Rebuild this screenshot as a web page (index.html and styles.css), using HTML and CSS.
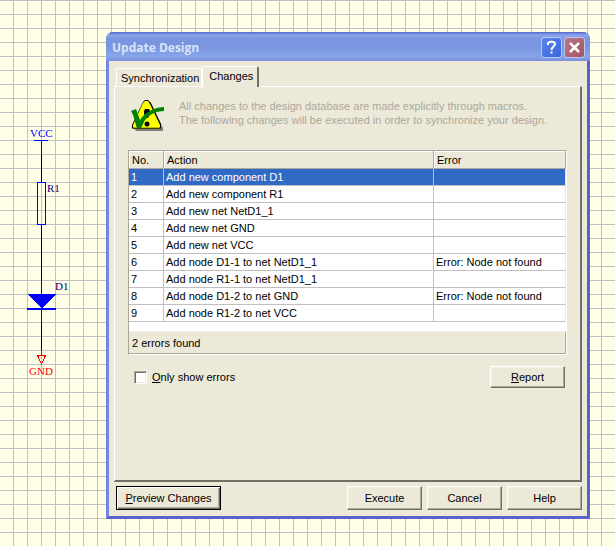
FILE: index.html
```
<!DOCTYPE html>
<html lang="en">
<head>
    <meta charset="UTF-8">
    <title>Update Design</title>
    <link rel="stylesheet" href="styles.css">
</head>
<body>
<!-- schematic sheet -->
<svg class="schematic" width="80" height="390" shape-rendering="crispEdges">
    <g fill="#000">
        <rect x="41" y="155" width="1" height="27"/>
        <rect x="41" y="225" width="1" height="55"/>
        <rect x="41" y="322" width="1" height="28"/>
    </g>
    <g fill="#00f">
        <rect x="34" y="140" width="14" height="1"/>
        <rect x="41" y="140" width="1" height="15"/>
        <rect x="41" y="280" width="1" height="42"/>
        <path d="M27 294h29L42 308h-1z"/>
        <rect x="27" y="308" width="29" height="2"/>
    </g>
    <rect x="37.5" y="182.5" width="8" height="42" fill="none" stroke="#00f"/>
    <rect x="41" y="350" width="1" height="6" fill="#f00"/>
    <path d="M37.500 355.500h8l-4 8.500z" fill="none" stroke="#f00"/>
    <text class="port" x="30" y="137">VCC</text>
    <text class="part" x="47" y="192">R1</text>
    <text class="part" x="55" y="290">D1</text>
    <text class="ground" x="29" y="375">GND</text>
</svg>

<div class="window">
    <div class="title-bar">
        <h1>Update Design</h1>
        <button class="cap help" aria-label="Help">
            <svg width="19" height="19" fill="none" stroke="#fff" stroke-width="2"><path d="M6 7V6c0-3 7-3 7 0 0 2.500-3.500 2.500-3.500 6M9.500 13.500v2"/></svg>
        </button>
        <button class="cap close" aria-label="Close">
            <svg width="19" height="19" fill="none" stroke="#fff" stroke-width="2.500"><path d="M5 5l9 9M14 5l-9 9"/></svg>
        </button>
    </div>
    <div class="client">
        <div class="tabs" role="tablist">
            <button class="tab" role="tab" aria-selected="false">Synchronization</button>
            <button class="tab active" role="tab" aria-selected="true">Changes</button>
        </div>
        <div class="panel" role="tabpanel">
            <div class="intro">
                <svg width="34" height="34">
                    <path d="M16 3h2l13 26v3H4l-2-3z" fill="#808080"/>
                    <path d="M13 1h3l3 3 10 21v4l-1 1H1l-1-1v-3L11 3z" fill="#000"/>
                    <path d="M13 2h3l2 3 10 21v2l-1 1H2l-1-1v-2L11 4z" fill="#ff0"/>
                    <path d="M1 29h27" stroke="#808000"/>
                    <path d="M13 10h4l1 2v3l-2 4h-2l-2-4v-3z"/>
                    <circle cx="15" cy="25" r="2.500"/>
                    <path d="M-1 12l5-2 4 11c4-6 11-12 24-13v4c-9 0-15 4-19 9l-4 8H5C3 24 2 16-1 12z" fill="#008000"/>
                </svg>
                <p>All changes to the design database are made explicitly through macros.<br>
                The following changes will be executed in order to synchronize your design.</p>
            </div>
            <div class="grid">
                <table>
                    <thead>
                        <tr><th class="no">No.</th><th>Action</th><th class="error">Error</th></tr>
                    </thead>
                    <tbody>
                        <tr class="selected"><td>1</td><td>Add new component D1</td><td></td></tr>
                        <tr><td>2</td><td>Add new component R1</td><td></td></tr>
                        <tr><td>3</td><td>Add new net NetD1_1</td><td></td></tr>
                        <tr><td>4</td><td>Add new net GND</td><td></td></tr>
                        <tr><td>5</td><td>Add new net VCC</td><td></td></tr>
                        <tr><td>6</td><td>Add node D1-1 to net NetD1_1</td><td>Error: Node not found</td></tr>
                        <tr><td>7</td><td>Add node R1-1 to net NetD1_1</td><td></td></tr>
                        <tr><td>8</td><td>Add node D1-2 to net GND</td><td>Error: Node not found</td></tr>
                        <tr><td>9</td><td>Add node R1-2 to net VCC</td><td></td></tr>
                    </tbody>
                </table>
                <div class="status">2 errors found</div>
            </div>
            <div class="options">
                <input type="checkbox" id="only-errors">
                <label for="only-errors"><u>O</u>nly show errors</label>
                <button class="btn"><u>R</u>eport</button>
            </div>
        </div>
        <div class="actions">
            <button class="btn default"><u>P</u>review Changes</button>
            <button class="btn">Execute</button>
            <button class="btn">Cancel</button>
            <button class="btn">Help</button>
        </div>
    </div>
</div>
</body>
</html>
```
FILE: styles.css
```
*{
    box-sizing:border-box;
}
body,h1,p{
    margin:0;
}
body{
    min-height:100vh;
    padding:32px 25px 27px 106px;
    background-color:#ffffe8;
    background-image:
        linear-gradient(#c0c0c0 1px,transparent 1px),
        linear-gradient(90deg,#c0c0c0 1px,transparent 1px);
    background-size:14px 14px;
    background-position:0 0,13px 0;
    font:11px/14px "Liberation Sans",Arial,sans-serif;
    color:#000;
}
button{
    font:inherit;
    color:inherit;
}
u{
    text-underline-offset:1px;
}

/* schematic */
.schematic{
    position:absolute;
    left:0;
    top:0;
}
.schematic text{
    font:11px "Liberation Serif","Times New Roman",serif;
}
.port{fill:#00f;}
.part{fill:#000080;}
.ground{fill:#f00;}

/* window frame */
.window{
    border-radius:7px 7px 0 0;
    overflow:hidden;
    background:#5057bb;
}
.title-bar{
    display:flex;
    align-items:center;
    gap:2px;
    height:29px;
    padding:2px 5px 0 6px;
    background:linear-gradient(#4e66c8,#8ba4ee 3px,#7a94df 7px,#7b97e0 16px,#86a5ec 24px,#7b8fdc 29px);
}
.title-bar h1{
    flex:1;
    font:bold 12px/18px "Open Sans",sans-serif;
    color:#d8e4f8;
}
.cap{
    width:21px;
    height:21px;
    padding:0;
    border:1px solid #b8c8f5;
    border-radius:3px;
}
.cap svg{
    display:block;
}
.help{background:linear-gradient(135deg,#5f85ea,#3866e0);}
.close{background:linear-gradient(135deg,#bb7886,#a4555f);}
.client{
    padding:5px 5px 6px;
    background:#ece9d8;
    border:solid;
    border-width:0 3px 3px;
    border-color:#6a74d4 #5a63ca #5a63ca #7288e0;
}

/* tabs */
.tabs{
    display:flex;
    align-items:flex-end;
    padding-left:2px;
}
.tab{
    height:18px;
    padding:0 2px 0 4px;
    background:#ece9d8;
    border:solid #fff;
    border-width:1px 1px 0 1px;
    border-radius:2px 2px 0 0;
}
.tab.active{
    position:relative;
    height:21px;
    margin-bottom:-1px;
    padding:0 4px 3px 6px;
    border-right:2px solid #716f64;
}
.panel{
    height:396px;
    padding:12px 13px 0 13px;
    border:solid;
    border-width:1px 2px 2px 1px;
    border-color:#fff #716f64 #716f64 #fff;
}
.intro{
    display:flex;
    gap:13px;
    padding-left:4px;
    color:#aca899;
}
.intro svg{
    flex:none;
    overflow:visible;
}

/* changes list */
.grid{
    margin-top:17px;
    border:1px solid;
    border-color:#aca899 #fff #fff #aca899;
    background:#fff;
}
table{
    width:100%;
    border-collapse:separate;
    border-spacing:0;
    table-layout:fixed;
}
th,td{
    height:17px;
    padding:0 2px;
    line-height:16px;
    text-align:left;
    white-space:nowrap;
    border-bottom:1px solid #c0c0c0;
    border-right:1px solid #c0c0c0;
}
td{
    padding-top:1px;
    line-height:15px;
}
th{
    height:18px;
    padding-left:3px;
    font-weight:normal;
    background:#ece9d8;
    border-color:#aca899;
    box-shadow:inset 1px 1px #fff;
}
.no{width:35px;}
.error{width:132px;}
td:last-child{
    border-right-color:#ece9d8;
}
.selected{
    background:#316ac5;
    color:#fff;
}
.status{
    margin-top:9px;
    height:23px;
    padding-left:3px;
    line-height:22px;
    background:#ece9d8;
    border:solid;
    border-width:1px 1px 1px 0;
    border-color:#f1efe2 #aca899 #aca899;
}

.options{
    display:flex;
    align-items:center;
    margin-top:11px;
    padding:0 2px 0 6px;
}
.options input{
    appearance:none;
    width:13px;
    height:13px;
    margin:0 5px 0 0;
    background:#fff;
    border:1px solid;
    border-color:#aca899 #fff #fff #aca899;
    box-shadow:inset 1px 1px #716f64,inset -1px -1px #ece9d8;
}
.options .btn{
    height:22px;
    margin-left:auto;
}

/* buttons */
.btn{
    width:75px;
    height:24px;
    padding:0;
    background:#ece9d8;
    border:1px solid;
    border-color:#fff #716f64 #716f64 #fff;
    box-shadow:inset -1px -1px #aca899,inset 1px 1px #f1efe2;
}
.btn.default{
    width:105px;
    margin-right:auto;
    border-color:#000;
    box-shadow:inset 1px 1px #fff,inset -1px -1px #716f64,inset -2px -2px #aca899;
}
.actions{
    display:flex;
    gap:5px;
    padding:4px 0 0 2px;
}
```
